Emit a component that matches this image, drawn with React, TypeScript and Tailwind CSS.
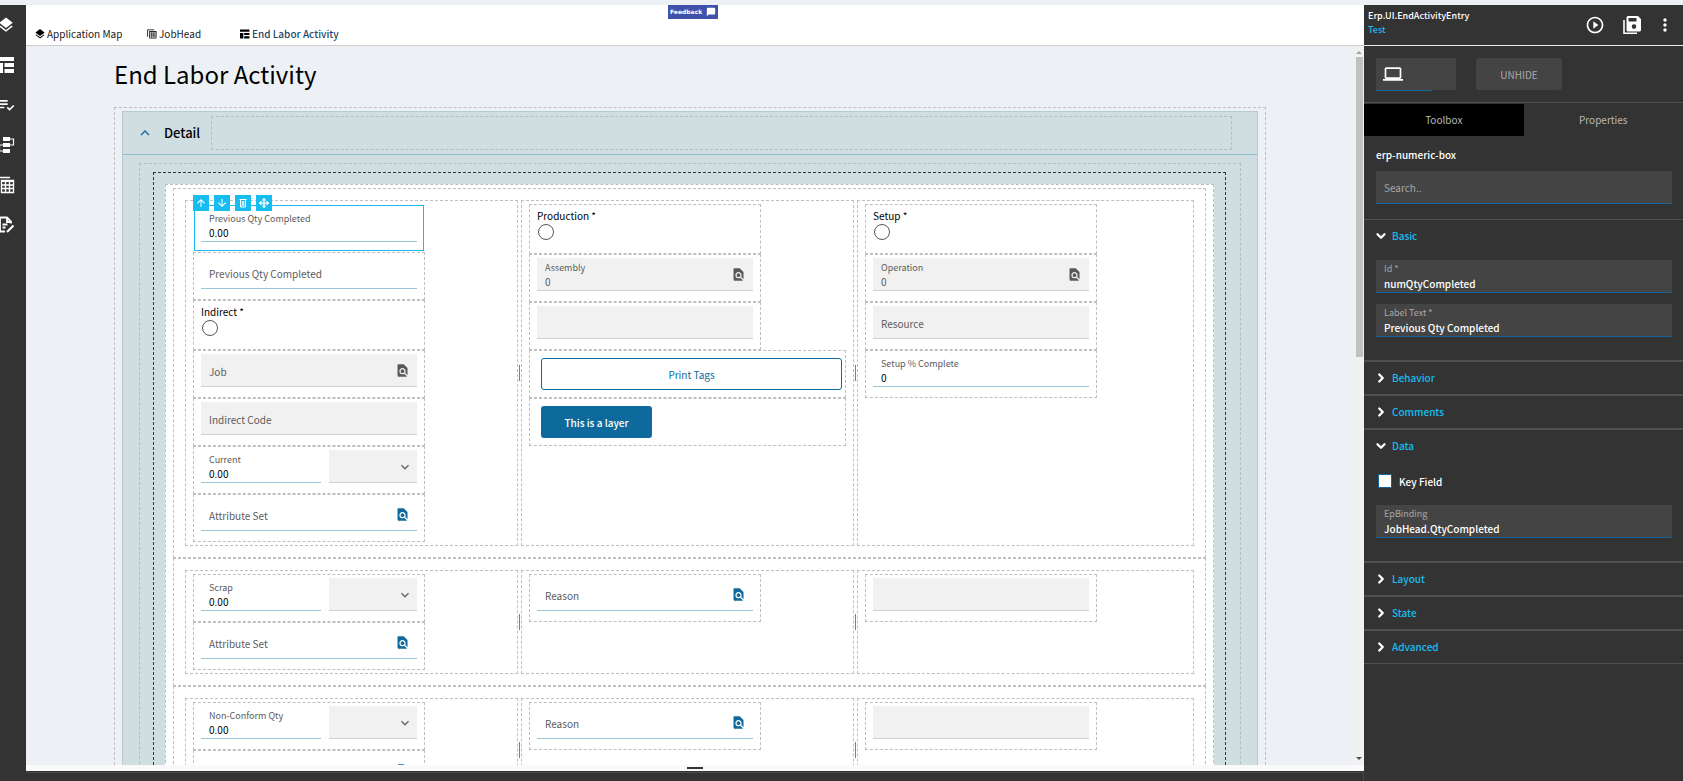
import React, { useId } from 'react';
import { ChevronDown, ChevronRight, Move } from 'lucide-react';
import {
  MdArrowDownward,
  MdArrowUpward,
  MdChatBubble,
  MdFindInPage,
  MdKeyboardArrowDown,
  MdKeyboardArrowUp,
  MdLaptop,
  MdLayers,
  MdMoreVert,
  MdPlayCircleOutline,
  MdPlaylistAddCheck,
} from 'react-icons/md';

interface IconProps {
  className?: string;
}

function LayoutIcon({ className }: IconProps) {
  return (
    <svg viewBox="0 0 18 18" fill="currentColor" className={className}>
      <path d="M0 1h17v4H0zM0 7h6v10H0zM7.500 7H17v4H7.500zM7.500 13H17v4H7.500z" />
    </svg>
  );
}

function FlowIcon({ className }: IconProps) {
  return (
    <svg viewBox="0 0 18 18" fill="currentColor" className={className}>
      <path d="M6 1h7v4H6zM6 7h7v4H6zM6 13h7v4H6z" />
      <path d="M13 3h3.5v6H13M6 9H2.500v6H6" fill="none" stroke="currentColor" strokeWidth="1.2" />
    </svg>
  );
}

function TableStackIcon({ className }: IconProps) {
  return (
    <svg viewBox="0 0 18 18" className={className} fill="none" stroke="currentColor">
      <path d="M1 14V1.500h12" strokeWidth="1.600" />
      <path d="M4.500 4.500h12v12h-12zM4.500 9h12M4.500 12.500h12M8.500 6v10.500M12.500 6v10.500" strokeWidth="1.400" />
      <path d="M4 5h13" strokeWidth="2" />
    </svg>
  );
}

function NoteEditIcon({ className }: IconProps) {
  return (
    <svg viewBox="0 0 18 18" className={className} fill="none" stroke="currentColor" strokeWidth="1.800">
      <path d="M14 7.500V5.500L10 1.500H3v14h5M10 1.500V6h4M5.500 8.500h5M5.500 11.500h3" />
      <path d="M10 16l6.500-6.500" strokeWidth="2.200" />
    </svg>
  );
}

function SaveStackIcon({ className }: IconProps) {
  return (
    <svg viewBox="0 0 20 20" className={className}>
      <path d="M2 5v13.200h13" fill="none" stroke="currentColor" strokeWidth="1.600" />
      <path
        fill="currentColor"
        fillRule="evenodd"
        d="M6 1h10l3 3v11a1.500 1.500 0 0 1-1.500 1.500H6A1.500 1.500 0 0 1 4.500 15V2.500A1.500 1.500 0 0 1 6 1zm.5 2v3.500h8V3zM12 9.300a2.300 2.300 0 1 0 0 4.600 2.300 2.300 0 0 0 0-4.600z"
      />
    </svg>
  );
}

function TrashIcon({ className }: IconProps) {
  return (
    <svg viewBox="0 0 10 10" className={className} fill="none" stroke="currentColor">
      <path d="M1.500 1.500h7M2.500 2v7h5V2M4.200 3v5M5.800 3v5" />
    </svg>
  );
}

const sidebarItems = [
  { label: 'Application map', icon: <MdLayers className="size-[18px]" /> },
  { label: 'Layout', icon: <LayoutIcon className="size-[18px]" /> },
  { label: 'Rules', icon: <MdPlaylistAddCheck className="size-[20px]" /> },
  { label: 'Events', icon: <FlowIcon className="size-[18px]" /> },
  { label: 'Data views', icon: <TableStackIcon className="size-[18px]" /> },
  { label: 'Notes', icon: <NoteEditIcon className="size-[18px]" /> },
];

interface FieldProps {
  label?: string;
  value?: string;
  disabled?: boolean;
  lookup?: boolean;
  className?: string;
}

function Field({ label, value, disabled, lookup, className = 'w-full' }: FieldProps) {
  const id = useId();
  const frame = disabled ? 'bg-[#f1f1f1] border-[#cfcfcf]' : 'border-[#9dc3d8]';

  return (
    <div className={`flex h-[33px] items-center border-b pr-[7px] pl-2 ${frame} ${className}`}>
      {value !== undefined ? (
        <div className="flex min-w-0 flex-1 flex-col pt-px">
          <label htmlFor={id} className="text-[9px] leading-[15px] text-[#5c5c5c]">{label}</label>
          <input
            id={id}
            defaultValue={value}
            className={`-mt-px h-4 w-full text-[10px] outline-none ${disabled ? 'text-[#5c5c5c]' : 'text-black'}`}
          />
        </div>
      ) : (
        <input
          aria-label={label ?? 'Description'}
          placeholder={label}
          className="min-w-0 flex-1 pt-[3px] text-[10px] outline-none placeholder:text-[#5c5c5c]"
        />
      )}
      {lookup && (
        <button aria-label="Look up" className={disabled ? 'text-[#5a5a5a]' : 'text-[#0e6a9c]'}>
          <MdFindInPage className="size-[15px]" />
        </button>
      )}
    </div>
  );
}

function Unit({ label }: { label: string }) {
  return (
    <div className="relative h-[33px] w-[88px] border-b border-[#cfcfcf] bg-[#f1f1f1]">
      <select aria-label={label} className="size-full appearance-none outline-none" />
      <MdKeyboardArrowDown className="pointer-events-none absolute top-[9px] right-1 size-4 text-[#666]" />
    </div>
  );
}

function Widget({ children, wide }: { children: React.ReactNode; wide?: boolean }) {
  return (
    <div className={`h-12 border border-dashed border-[#bfbfbf] px-[7px] pt-[3px] ${wide ? '' : 'w-[232px]'}`}>
      {children}
    </div>
  );
}

function RadioWidget({ label }: { label: string }) {
  return (
    <div className="h-[50px] w-[232px] border border-dashed border-[#bfbfbf] px-[7px] pt-[3px]">
      <label className="flex flex-col text-[10px] leading-4 text-black">
        {label} *
        <input type="radio" className="ml-px size-4 appearance-none rounded-full border border-[#555] bg-white" />
      </label>
    </div>
  );
}

function QtyWidget({ label }: { label: string }) {
  return (
    <Widget>
      <div className="flex gap-2">
        <Field label={label} value="0.00" className="w-[120px]" />
        <Unit label={`${label} unit`} />
      </div>
    </Widget>
  );
}

const selectedActions = [
  { label: 'Move up', icon: <MdArrowUpward className="size-3" /> },
  { label: 'Move down', icon: <MdArrowDownward className="size-3" /> },
  { label: 'Delete', icon: <TrashIcon className="size-[10px]" /> },
  { label: 'Move', icon: <Move className="size-[10px]" strokeWidth={3} /> },
];

// Widget that is currently being edited in the properties panel
function SelectedWidget() {
  return (
    <div className="relative h-12 w-[232px] p-px">
      <div className="h-[46px] border border-[#18bdf0] px-[6px] pt-[3px]">
        <Field label="Previous Qty Completed" value="0.00" />
      </div>
      <div className="absolute -top-[9px] left-0 flex gap-[5px]">
        {selectedActions.map((a) => (
          <button
            key={a.label}
            aria-label={a.label}
            className="flex size-4 items-center justify-center bg-[#18bdf0] text-white"
          >
            {a.icon}
          </button>
        ))}
      </div>
    </div>
  );
}

function Column({ children, last }: { children?: React.ReactNode; last?: boolean }) {
  return (
    <div className="flex">
      <div className="min-w-0 flex-1 border border-dashed border-[#bfbfbf] px-[7px] py-[3px]">{children}</div>
      {!last && (
        <div className="flex w-[3px] items-center justify-center">
          <div className="h-4 w-px bg-[#3f8fd0]" />
        </div>
      )}
    </div>
  );
}

function Section({ children }: { children: React.ReactNode }) {
  return (
    <div className="grid grid-cols-[336fr_336fr_337fr] border border-dashed border-[#bfbfbf] p-[11px]">
      {children}
    </div>
  );
}

function QtySection({ label }: { label: string }) {
  return (
    <Section>
      <Column>
        <QtyWidget label={label} />
        <Widget><Field label="Attribute Set" lookup /></Widget>
      </Column>
      <Column>
        <Widget><Field label="Reason" lookup /></Widget>
      </Column>
      <Column last>
        <Widget><Field disabled /></Widget>
      </Column>
    </Section>
  );
}

function Canvas() {
  return (
    <div className="min-w-0 flex-1 overflow-hidden">
      <div className="mx-auto max-w-6xl pt-3">
        <h1 className="text-2xl leading-8 text-black">End Labor Activity</h1>
        <div className="mt-[17px] border border-dashed border-[#bfbfbf] px-[7px] pt-[3px] pb-2">
          <section className="border border-[#b9cacd] bg-[#d0dde1] pb-4">
            <header className="flex h-[43px] items-center border-b border-[#8bbfcc] pr-[25px] pl-[13px]">
              <button aria-label="Collapse detail" className="text-[#1c6da3]">
                <MdKeyboardArrowUp className="size-[18px]" />
              </button>
              <h2 className="ml-[10px] text-[13px] font-medium text-black">Detail</h2>
              <div className="ml-[11px] h-[34px] flex-1 border border-dashed border-[#b0bfc1]" />
            </header>
            <div className="mx-4 mt-2 border border-dashed border-[#b0bfc1] pt-2 pr-[14px] pb-2 pl-[13px]">
              <div className="border border-dashed border-[#333] p-[11px]">
                <div className="border border-dashed border-[#bfbfbf] bg-white px-[7px] py-[3px]">
                  <Section>
                    <Column>
                      <SelectedWidget />
                      <Widget><Field label="Previous Qty Completed" /></Widget>
                      <RadioWidget label="Indirect" />
                      <Widget><Field label="Job" disabled lookup /></Widget>
                      <Widget><Field label="Indirect Code" disabled /></Widget>
                      <QtyWidget label="Current" />
                      <Widget><Field label="Attribute Set" lookup /></Widget>
                    </Column>
                    <Column>
                      <RadioWidget label="Production" />
                      <Widget><Field label="Assembly" value="0" disabled lookup /></Widget>
                      <Widget><Field disabled /></Widget>
                      <Widget wide>
                        <div className="flex pt-1 pl-1">
                          <button className="-mr-1 h-8 flex-1 rounded-[3px] border border-[#0e6a9c] bg-white text-[10px] text-[#0e6a9c]">
                            Print Tags
                          </button>
                        </div>
                      </Widget>
                      <Widget wide>
                        <div className="flex pt-1 pl-1">
                          <button className="h-8 min-w-[111px] rounded-[3px] bg-[#0e6a9c] px-5 text-[10px] font-medium text-white">
                            This is a layer
                          </button>
                        </div>
                      </Widget>
                    </Column>
                    <Column last>
                      <RadioWidget label="Setup" />
                      <Widget><Field label="Operation" value="0" disabled lookup /></Widget>
                      <Widget><Field label="Resource" disabled /></Widget>
                      <Widget><Field label="Setup % Complete" value="0" /></Widget>
                    </Column>
                  </Section>
                  <QtySection label="Scrap" />
                  <QtySection label="Non-Conform Qty" />
                </div>
              </div>
            </div>
          </section>
        </div>
      </div>
    </div>
  );
}

function ScrollTrack() {
  return (
    <div className="flex w-[10px] flex-col items-center bg-[#f1f1f1] pt-[5px] pb-[5px]">
      <svg viewBox="0 0 6 3" className="h-[3px] w-[6px] fill-[#a0a0a0]"><path d="M0 3l3-3 3 3z" /></svg>
      <div className="mt-[3px] h-[300px] w-[7px] bg-[#c1c1c1]" />
      <svg viewBox="0 0 6 3" className="mt-auto h-[3px] w-[6px] fill-[#505050]"><path d="M0 0l3 3 3-3z" /></svg>
    </div>
  );
}

function PropField({ label, value }: { label: string; value: string }) {
  const id = useId();
  return (
    <div className="flex h-[33px] flex-col border-b border-[#15639a] bg-[#444] px-2 pt-px">
      <label htmlFor={id} className="text-[9px] leading-4 text-[#a8a8a8]">{label}</label>
      <input
        id={id}
        defaultValue={value}
        className="-mt-[2px] h-4 w-full text-[10px] font-medium text-white outline-none"
      />
    </div>
  );
}

interface GroupProps {
  title: string;
  children?: React.ReactNode;
}

function Group({ title, children }: GroupProps) {
  const Chevron = children ? ChevronDown : ChevronRight;
  return (
    <section className="border-y border-[#505050]">
      <button aria-expanded={!!children} className="flex h-8 w-full items-center gap-1 pb-px pl-[10px]">
        <Chevron className="size-[14px] text-white" strokeWidth={4} />
        <span className="text-[10px] font-medium text-[#18bdf0]">{title}</span>
      </button>
      {children && <div className="pr-[11px] pb-[23px] pl-3">{children}</div>}
    </section>
  );
}

function PropertiesPanel() {
  return (
    <aside className="flex w-[319px] shrink-0 flex-col bg-[#333] text-white">
      <header className="flex h-[41px] items-center border-b border-[#e8e8e8] pr-2 pl-1">
        <div className="flex-1 pb-[5px] text-[9px] leading-[14px] font-medium">
          <p>Erp.UI.EndActivityEntry</p>
          <p className="text-[#18bdf0]">Test</p>
        </div>
        <div className="flex items-center">
          <button aria-label="Preview"><MdPlayCircleOutline className="size-5" /></button>
          <button aria-label="Save" className="ml-[17px]"><SaveStackIcon className="size-5" /></button>
          <button aria-label="More" className="ml-[13px]"><MdMoreVert className="size-5" /></button>
        </div>
      </header>

      <div className="flex h-[57px] gap-5 border-b border-[#505050] pt-3 pl-3">
        <button aria-label="Device" className="flex h-8 w-20 flex-col bg-[#444]">
          <span className="flex h-8 shrink-0 items-center pl-[7px]"><MdLaptop className="size-5" /></span>
          <span className="h-px w-14 shrink-0 bg-[#15639a]" />
        </button>
        <button className="h-8 w-[86px] rounded-[3px] bg-[#444] text-[10px] text-[#a8a8a8]">UNHIDE</button>
      </div>

      <div role="tablist" className="mt-px flex text-[10px] text-[#b8b8b8]">
        <button role="tab" aria-selected="true" className="h-8 flex-1 bg-black pb-[2px]">Toolbox</button>
        <button role="tab" aria-selected="false" className="h-8 flex-1 pb-[2px]">Properties</button>
      </div>

      <div className="pt-[11px] pr-[11px] pb-[15px] pl-3">
        <h3 className="text-[10px] leading-4 font-medium">erp-numeric-box</h3>
        <input
          type="search"
          aria-label="Search"
          placeholder="Search.."
          className="mt-2 h-[33px] w-full border-b border-[#15639a] bg-[#444] px-2 text-[10px] outline-none placeholder:text-[#a8a8a8]"
        />
      </div>

      <Group title="Basic">
        <div className="flex flex-col gap-[11px] pt-2">
          <PropField label="Id *" value="numQtyCompleted" />
          <PropField label="Label Text *" value="Previous Qty Completed" />
        </div>
      </Group>
      <Group title="Behavior" />
      <Group title="Comments" />
      <Group title="Data">
        <div className="flex flex-col gap-[17px] pt-3">
          <label className="flex h-[14px] items-center gap-[7px] pl-[2px] text-[10px] font-medium">
            <input type="checkbox" className="size-[14px] appearance-none border border-[#15639a] bg-white" />
            Key Field
          </label>
          <PropField label="EpBinding" value="JobHead.QtyCompleted" />
        </div>
      </Group>
      <Group title="Layout" />
      <Group title="State" />
      <Group title="Advanced" />
    </aside>
  );
}

export default function App() {
  return (
    <div className="flex h-screen overflow-hidden bg-[#edf1f5] pt-[5px] font-['Noto_Sans_CJK_SC',sans-serif] text-[10px]">
      <nav className="flex w-[26px] shrink-0 flex-col overflow-hidden bg-[#333] text-white">
        {sidebarItems.map((item) => (
          <button key={item.label} aria-label={item.label} className="-ml-[14px] flex h-10 w-10 items-center justify-center">
            {item.icon}
          </button>
        ))}
      </nav>

      <main className="flex min-w-0 flex-1 flex-col">
        <header className="relative flex h-[41px] shrink-0 items-end border-b border-[#ccc] bg-white pb-[3px] pl-2 leading-4 text-[#222]">
          <a href="#map" className="flex w-[113px] items-center gap-px">
            <MdLayers className="size-3 text-black" />
            Application Map
          </a>
          <a href="#jobhead" className="flex w-[93px] items-center gap-[2px]">
            <TableStackIcon className="size-[10px]" />
            JobHead
          </a>
          <a href="#end-labor" className="flex items-center gap-[2px] font-medium text-[#1f4a68]">
            <LayoutIcon className="size-[10px] text-black" />
            End Labor Activity
          </a>
          <button className="absolute top-0 left-1/2 -ml-[27px] flex h-[14px] w-[50px] items-center justify-between bg-[#3f51a8] px-[2px] font-['DejaVu_Sans',sans-serif] text-[6px] font-bold text-white">
            Feedback
            <MdChatBubble className="size-[10px]" />
          </button>
        </header>

        <div className="flex min-h-0 flex-1">
          <Canvas />
          <ScrollTrack />
        </div>

        <div className="flex h-[6px] shrink-0 justify-center bg-[#fafafa] pt-[2px]">
          <div className="h-[2px] w-4 bg-[#333]" />
        </div>
        <div className="h-[10px] shrink-0 bg-[#333] pt-px">
          <div className="h-full border-t border-r border-[#4a4a4a]" />
        </div>
      </main>

      <PropertiesPanel />
    </div>
  );
}
